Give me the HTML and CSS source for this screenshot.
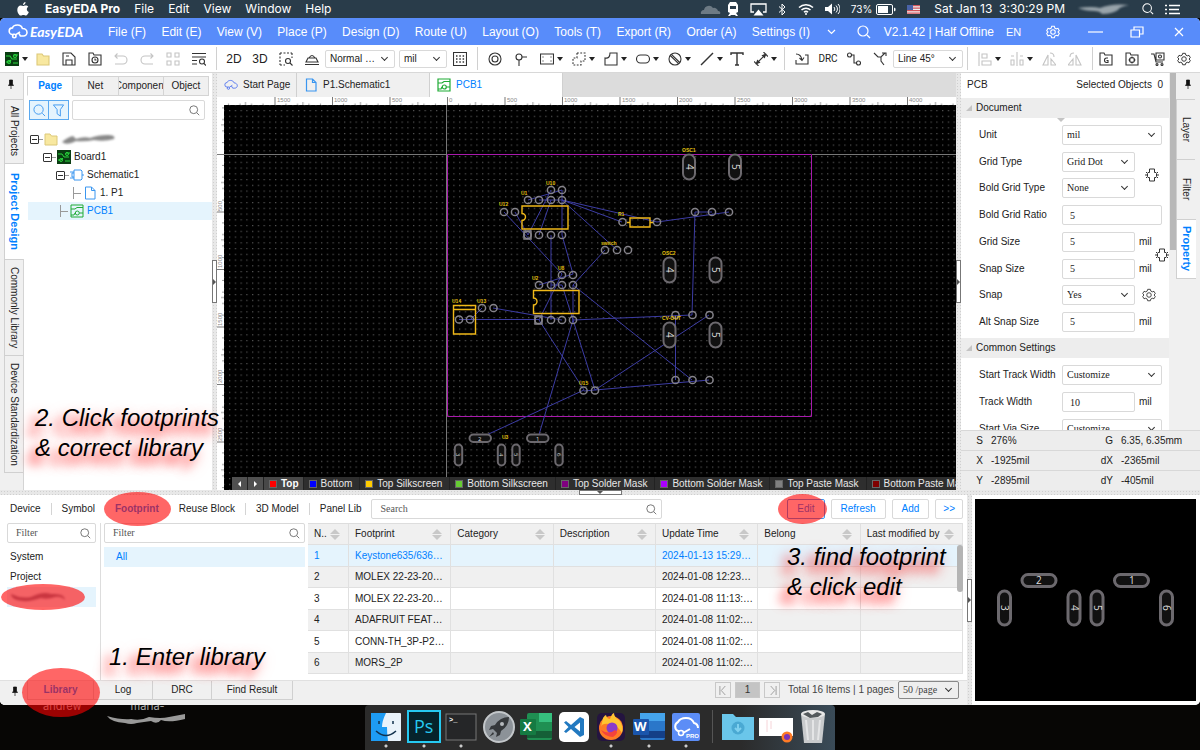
FILE: index.html
```html
<!DOCTYPE html>
<html lang="en">
<head>
    <meta charset="UTF-8">
    <meta name="viewport" content="width=device-width, initial-scale=1.0">
    <title>EasyEDA Pro</title>
    <link rel="stylesheet" href="styles.css">
</head>
<body>
    <!-- shared icons -->
    <svg class="defs" aria-hidden="true">
        <symbol id="search" viewBox="0 0 14 14"><circle cx="6" cy="6" r="5"/><path d="M10 10l3 3"/></symbol>
        <symbol id="gear" viewBox="0 0 16 16"><path d="M6.500 1.500h3l.6 2 1.600.9 2-.6 1.500 2.700-1.500 1.500 1.500 1.600-1.500 2.700-2-.6-1.600.9-.6 2h-3l-.6-2-1.600-.9-2 .6L.8 9.600l1.500-1.600L.8 6.500l1.500-2.700 2 .6 1.600-.9z"/><circle cx="8" cy="8" r="2.600"/></symbol>
        <symbol id="cloud" viewBox="0 0 20 15"><path d="M6 10.500H4.500a3.300 3.300 0 0 1 0-6.600C5 1.800 7.200 1 9.500 1c2.400 0 4.300 1.400 4.900 3.500 2.600 0 4.600 1.700 4.600 4.100 0 1.800-1.500 3.400-3.600 3.400h-3l-1.800-3.200M7.500 10.800l4.500-3"/><circle cx="6.300" cy="12" r="1.700"/></symbol>
        <symbol id="file" viewBox="0 0 14 14"><path d="M2.500 1h6l3.500 3.500V13h-9.500zM8.500 1v3.500H12"/></symbol>
        <symbol id="folder" viewBox="0 0 14 14"><path d="M1 2h5l1.500 2H13v9H1z" fill="#f8e8a0" stroke="#dcc878"/></symbol>
        <symbol id="board" viewBox="0 0 14 14"><path d="M0 0h14v14H0z" fill="#0a3d12" stroke="none"/><path d="M1 4h4l2 3h5M1 10h3l2-2M8 11h5M9 3h4" stroke="#28d83c"/><circle cx="4" cy="10" r="1.500" stroke="#28d83c"/><circle cx="10" cy="4" r="1.500" stroke="#28d83c"/></symbol>
        <symbol id="pcb" viewBox="0 0 14 14"><path d="M1 1h12v12H1zM1 5h4l2-1.500h6M1 11h3l1-2M9.500 9H13"/><circle cx="7.300" cy="9" r="2"/></symbol>
        <symbol id="pin" viewBox="0 0 8 10"><path d="M2.500 1h3v4l1 1.500h-5l1-1.500zM4 6.500V10" fill="#111"/></symbol>
        <symbol id="chip" viewBox="0 0 14 14"><path d="M4.500 1h5v3.500H11l.500 1v3l-.500 1H9.500V13h-5V9.500H3l-.500-1v-3l.500-1h1.500zM0 7h2.500M11.500 7H14M1 4l1 1M13 4l-1 1M1 10l1-1M13 10l-1-1"/></symbol>
    </svg>

    <header class="macbar">
        <svg class="apple" viewBox="0 0 12 14"><path d="M8.500 0C8.600 1.600 7.500 3 6 3.100 5.900 1.600 7.200.2 8.500 0zM6.200 4c.7 0 1.400-.7 2.600-.6 1 0 1.900.5 2.500 1.300-2.200 1.400-1.800 4.400.5 5.300-.5 1.400-1.700 3.500-2.900 3.600-1 0-1.300-.6-2.500-.6s-1.600.6-2.500.6C2.300 13.600.3 10.600.3 7.900c0-2.700 1.600-4.400 3.400-4.400 1.100 0 1.900.6 2.500.5z"/></svg>
        <b>EasyEDA Pro</b><span>File</span><span>Edit</span><span>View</span><span>Window</span><span>Help</span>
        <div class="tray">
            <svg class="haze" width="22" height="12" viewBox="0 0 22 12"><path d="M1 11a3 3 0 0 1 3-4 5 5 0 0 1 9-2 4 4 0 0 1 5 3 2 2 0 0 1 2 3z" fill="#6d7a84"/></svg>
            <svg width="12" height="15" viewBox="0 0 12 15"><path d="M3 0h6l2 3v7l-2 1 2 3H9l-1-1H4l-1 1H1l2-3-2-1V3z" fill="#fff"/><path d="M3 4h6v3H3z" fill="#2b3d4b"/></svg>
            <svg width="17" height="13" viewBox="0 0 17 13"><path d="M4 9H1V1h15v8h-3" fill="none" stroke="#fff" stroke-width="1.300"/><path d="M8.500 6.500l5 6h-10z" fill="#fff"/></svg>
            <svg width="9" height="13" viewBox="0 0 9 13"><path d="M1 3.500l6 5.500-3 3V1l3 3-6 5.500" fill="none" stroke="#fff"/></svg>
            <svg width="16" height="12" viewBox="0 0 16 12"><path d="M1 4.500a10 10 0 0 1 14 0M3.500 7a6.500 6.500 0 0 1 9 0M6 9.300a3 3 0 0 1 4 0" fill="none" stroke="#fff" stroke-width="1.500"/><circle cx="8" cy="11" r="1" fill="#fff"/></svg>
            <svg width="15" height="12" viewBox="0 0 15 12"><path d="M0 4h3l4-3.500v11L3 8H0z" fill="#fff"/><path d="M9 4a3 3 0 0 1 0 4M11 2.500a5 5 0 0 1 0 7M13 1a7 7 0 0 1 0 10" fill="none" stroke="#fff"/></svg>
            <small>73%</small>
            <svg width="20" height="11" viewBox="0 0 20 11"><rect x=".5" y=".5" width="16" height="10" rx="1.500" fill="none" stroke="#fff"/><path d="M2 2h10v7H2zM18 3.500l1.500 1v2l-1.500 1z" fill="#fff"/></svg>
            <svg width="13" height="9" viewBox="0 0 13 9"><path d="M0 0h13v9H0z" fill="#eee"/><path d="M0 .7h13M0 3.200h13M0 5.700h13M0 8.200h13" stroke="#d2545c" stroke-width="1.300"/><path d="M0 0h6v5H0z" fill="#4a63a8"/></svg>
            <span class="clock">Sat Jan 13&nbsp; 3:30:29 PM</span>
            <svg class="smear" width="54" height="14" viewBox="0 0 54 14"><path d="M1 6q14-2 22 0q12-5 29-3q-10 2-11 5q-6 4-16 4q-2-3-8-3q-9 0-16-3" fill="#98a3aa"/></svg>
            <svg class="line-icon" width="12" height="12"><use href="#search"/></svg>
            <svg width="16" height="11" viewBox="0 0 16 11"><path d="M4 1.500h11M4 5.500h10M4 9.500h11M0 1.500h2M0 5.500h2M0 9.500h2" stroke="#fff" stroke-width="1.500"/></svg>
        </div>
    </header>

    <main class="app">
        <nav class="menubar">
            <div class="logo"><svg class="line-icon"><use href="#cloud"/></svg><span>EasyEDA</span></div>
            <div class="menus">
                <button>File (F)</button><button>Edit (E)</button><button>View (V)</button><button>Place (P)</button><button>Design (D)</button><button>Route (U)</button><button>Layout (O)</button><button>Tools (T)</button><button>Export (R)</button><button>Order (A)</button><button>Settings (I)</button>
            </div>
            <div class="winbar">
                <button aria-label="More"><svg class="line-icon" width="9" height="6" viewBox="0 0 9 6"><path d="M1 1l3.500 3.500L8 1"/></svg></button>
                <button aria-label="Search"><svg class="line-icon" width="14" height="14"><use href="#search"/></svg></button>
                <span class="version">V2.1.42 | Half Offline</span>
                <button class="lang">EN</button>
                <button class="cell" aria-label="Settings"><svg class="line-icon" width="14" height="14"><use href="#gear"/></svg></button>
                <button class="cell" aria-label="Minimize"><svg class="line-icon" width="15" height="14" viewBox="0 0 15 14"><path d="M0 7h15"/></svg></button>
                <button class="cell" aria-label="Restore"><svg class="line-icon" width="14" height="12" viewBox="0 0 14 12"><path d="M1 4h8.500v7H1zM4 4V1h9v7H9.500"/></svg></button>
                <button class="cell" aria-label="Close"><svg class="line-icon" width="10" height="10" viewBox="0 0 10 10"><path d="M1 1l8 8M9 1L1 9"/></svg></button>
            </div>
        </nav>

        <div class="toolbar">
            <button class="drop first" aria-label="New"><svg><use href="#board"/></svg></button>
            <button aria-label="Open"><svg><use href="#folder"/></svg></button>
            <button aria-label="Save"><svg viewBox="0 0 14 14"><path d="M1 1h8l4 4v8H1zM4 13V8h6v5M4 4h3"/></svg></button>
            <button aria-label="History"><svg viewBox="0 0 14 14"><path d="M1 13V1h4l1 2h7v10z"/><circle cx="7" cy="8" r="3"/><path d="M7 6.500V8h1.500"/></svg></button>
            <button class="off" aria-label="Undo"><svg viewBox="0 0 14 14"><path d="M3.500 1.500L1 4l2.500 2.500M1 4h8a4 4 0 0 1 0 8H1"/></svg></button>
            <button class="off" aria-label="Redo"><svg viewBox="0 0 14 14"><path d="M10.500 1.500L13 4l-2.500 2.500M13 4H5a4 4 0 0 0 0 8h8"/></svg></button>
            <button class="off" aria-label="Panels"><svg viewBox="0 0 14 14"><path d="M1 1h4v4H1zM9 1h4v4H9zM1 9h4v4H1zM9 9h4v4H9z"/></svg></button>
            <button aria-label="Find"><svg viewBox="0 0 14 14"><path d="M0 1.500h14M0 5h14M0 8.500h5M0 12h5M12 11.500l2 2"/><circle cx="10" cy="9.500" r="2.500"/></svg></button>
            <i class="sep"></i>
            <button class="word">2D</button>
            <button class="word">3D</button>
            <button aria-label="Select"><svg viewBox="0 0 14 14"><path d="M1 1h12M1 1v12M13 1v5M1 13h5" stroke-dasharray="2 1.500"/><circle cx="9" cy="9" r="2.500"/><path d="M11 11l2.500 2.500"/></svg></button>
            <button aria-label="Brush"><svg viewBox="0 0 14 14"><path d="M1 10h12l-2-4H3zM4 6q3-5 6 0M0 12.500h14"/></svg></button>
            <span class="select w70"><select aria-label="View mode"><option>Normal …</option></select></span>
            <span class="select w48"><select aria-label="Unit"><option>mil</option></select></span>
            <button aria-label="Grid"><svg viewBox="0 0 14 14"><path d="M.5.500h13v13H.5z"/><path d="M3 4h9M3 7h9M3 10h9" stroke-dasharray="1.500 1.800" stroke-width="1.500"/></svg></button>
            <i class="sep"></i>
            <button aria-label="Pad"><svg viewBox="0 0 14 14"><circle cx="7" cy="7" r="6"/><circle cx="7" cy="7" r="3"/></svg></button>
            <button aria-label="Via"><svg viewBox="0 0 14 14"><circle cx="5" cy="5" r="3"/><path d="M8 5h5M5 8v6"/></svg></button>
            <button class="drop" aria-label="Board outline"><svg viewBox="0 0 14 14"><path d="M.500 2h13v10H.500z"/><path d="M3 4.500v1M11 4.500v1M3 8.500v1M11 8.500v1"/></svg></button>
            <button class="drop" aria-label="Region"><svg viewBox="0 0 14 14"><path d="M5 1h8v8h-4v4H1V6h4z" stroke-dasharray="1.800 1.500"/></svg></button>
            <button class="drop" aria-label="Polygon"><svg viewBox="0 0 14 14"><path d="M6 1h7v12H1V6q5 1 5-5z"/></svg></button>
            <button class="drop" aria-label="Shape"><svg viewBox="0 0 14 14"><rect x=".5" y="3" width="13" height="8" rx="4"/></svg></button>
            <button class="drop" aria-label="Keepout"><svg viewBox="0 0 14 14"><circle cx="7" cy="7" r="6"/><path d="M2.300 3.500l8.200 8.200M3.500 2.300l8.200 8.200"/></svg></button>
            <button class="drop" aria-label="Line"><svg viewBox="0 0 14 14"><path d="M1 13L13 1" stroke-width="1.500"/></svg></button>
            <button class="text" aria-label="Text"><svg viewBox="0 0 14 14"><path d="M1 3V1h12v2M7 1v12M5 13h4" stroke-width="1.400"/></svg></button>
            <button class="drop" aria-label="Dimension"><svg viewBox="0 0 14 14"><path d="M2 12L12 2M9.500 0L14 4.500M0 9.500L4.500 14"/><path d="M11.500 2.500l-3 1 2 2zM2.500 11.500l3-1-2-2z" fill="#333"/></svg></button>
            <i class="sep"></i>
            <button aria-label="Import"><svg viewBox="0 0 14 14"><path d="M1 2q5 0 6 6M4.500 6L7 8.500 9 5.500M1 8v4h12V3h-3"/></svg></button>
            <button class="drc">DRC</button>
            <button aria-label="Track"><svg viewBox="0 0 14 14"><circle cx="2.500" cy="3" r="2"/><circle cx="11.500" cy="11" r="2"/><path d="M4.500 3H7v8h2.500"/></svg></button>
            <button aria-label="Route"><svg viewBox="0 0 14 14"><path d="M1 1l4 4h3l4-4M9 1h4v3M8 5v4l3 4"/></svg></button>
            <span class="select w70"><select aria-label="Line mode"><option>Line 45°</option></select></span>
            <i class="sep"></i>
            <button class="drop off" aria-label="Align"><svg viewBox="0 0 14 14"><path d="M1 0v14M4 2h5v4H4zM4 9h9v4H4z"/></svg></button>
            <button class="drop off" aria-label="Distribute"><svg viewBox="0 0 14 14"><path d="M7 0v14M1 8h3v5H1zM10 8h3v5h-3zM1 4h3M10 4h3"/></svg></button>
            <button class="off" aria-label="Rotate left"><svg viewBox="0 0 14 14"><path d="M6 13H1L6 3zM9 13V7l5 6zM8 1q4 0 4 4"/></svg></button>
            <button class="off" aria-label="Rotate right"><svg viewBox="0 0 14 14"><path d="M8 13h5L8 3zM5 13V7l-5 6zM6 1Q2 1 2 5"/></svg></button>
            <i class="sep tight"></i>
            <button aria-label="Gerber"><svg viewBox="0 0 14 14"><path d="M1 13V1h4l1 2h7v10z"/><path d="M9 6H7.500Q5.500 6 5.500 8.200T7.500 10.500H9V8.500H7.500"/></svg></button>
            <button aria-label="Pick and place"><svg viewBox="0 0 14 14"><path d="M1 13V1h4l1 2h7v10z"/><circle cx="7" cy="8" r="2.500"/><path d="M7 4.500v2M7 9.500v2M3.500 8h2M8.500 8h2"/></svg></button>
            <button aria-label="Order"><svg viewBox="0 0 14 14"><path d="M0 2h3l2 8h7M5 1h8v7H5z"/><circle cx="9" cy="4.500" r="1.500"/><circle cx="6" cy="12.500" r="1"/><circle cx="11" cy="12.500" r="1"/></svg></button>
            <button aria-label="Preferences"><svg><use href="#gear"/></svg></button>
        </div>

        <div class="workspace">
            <aside class="side left">
                <svg class="pin"><use href="#pin"/></svg>
                <button class="t64">All Projects</button>
                <button class="t96 on">Project Design</button>
                <button class="t96">Commonly Library</button>
                <button class="t117">Device Standardization</button>
            </aside>

            <section class="project">
                <div class="ptabs">
                    <button class="on">Page</button><button>Net</button><button><span>Component</span></button><button>Object</button>
                </div>
                <div class="pfind">
                    <button aria-label="Find"><svg><use href="#search"/></svg></button><button aria-label="Filter"><svg viewBox="0 0 14 14"><path d="M1.500 1h11L9 6v7L5.500 10.500V6z"/></svg></button>
                    <label class="field"><input type="text" aria-label="Find in project"><svg><use href="#search"/></svg></label>
                </div>
                <ul class="tree">
                    <li><i class="box"></i><svg><use href="#folder"/></svg>
                        <svg class="scrawl" viewBox="0 0 54 12"><path d="M1 9q6-5 11-6l3 3q8-3 14-1q8-3 18-3q8 0 6 4q-10 3-20 1q-10 2-18 1Q6 13 1 9" fill="#888"/></svg></li>
                    <li class="l1"><i class="box"></i><svg><use href="#board"/></svg>Board1</li>
                    <li class="l2"><i class="box"></i><svg viewBox="0 0 14 14" class="blue"><path d="M4 2h7l1 1v8l-1 1H4zM0 4h4M0 10h4M12 7h2M4 5H2v4h2"/></svg>Schematic1</li>
                    <li class="l3"><i class="leaf"></i><svg class="blue"><use href="#file"/></svg>1. P1</li>
                    <li class="l2 on"><i class="leaf"></i><svg class="green"><use href="#pcb"/></svg>PCB1</li>
                </ul>
                <p class="note note2">2. Click footprints<br>&amp; correct library</p>
            </section>

            <div class="split"><i></i></div>

            <section class="editor">
                <div class="docs">
                    <button><svg class="indigo"><use href="#cloud"/></svg>Start Page</button>
                    <button class="wide"><svg class="blue"><use href="#file"/></svg>P1.Schematic1</button>
                    <button class="wide on"><svg class="green"><use href="#pcb"/></svg>PCB1</button>
                </div>
                <svg class="hruler">
                    <defs>
                        <pattern id="ht" patternUnits="userSpaceOnUse" x="230" width="57.500" height="8"><path d="M.5 0v8" stroke="#777"/><path d="M28.500 5v3M11.500 6.500V8M23 6.500V8M34.500 6.500V8M46 6.500V8" stroke="#999"/></pattern>
                    </defs>
                    <rect x="7" width="100%" height="8" fill="url(#ht)"/>
                    <text x="60" y="5">1500</text><text x="117" y="5">1000</text><text x="175" y="5">500</text><text x="232" y="5">0</text><text x="290" y="5">500</text><text x="347" y="5">1000</text><text x="405" y="5">1500</text><text x="462" y="5">2000</text><text x="520" y="5">2500</text><text x="577" y="5">3000</text><text x="635" y="5">3500</text><text x="692" y="5">4000</text>
                </svg>
                <div class="stage">
                    <svg class="vruler">
                        <defs>
                            <pattern id="vt" patternUnits="userSpaceOnUse" y="49" width="7" height="57.500"><path d="M0 .5h7" stroke="#777"/><path d="M4 28.500h3M5 11.500h2M5 23h2M5 34.500h2M5 46h2" stroke="#999"/></pattern>
                        </defs>
                        <rect width="7" height="100%" fill="url(#vt)"/>
                        <g><text transform="translate(5 106)rotate(-90)">500</text><text transform="translate(5 163)rotate(-90)">1000</text><text transform="translate(5 221)rotate(-90)">1500</text><text transform="translate(5 278)rotate(-90)">2000</text><text transform="translate(5 336)rotate(-90)">2500</text></g>
                    </svg>
                    <div class="board">
                        <svg class="pcb">
                            <defs>
                                <pattern id="dots" patternUnits="userSpaceOnUse" x="-.75" y="-.75" width="5.750" height="5.750"><path d="M0 0h1.300v1.300H0z" fill="#505050"/></pattern>
                                <circle id="p" r="3.600"/>
                                <rect id="v" x="-6" y="-12.500" width="12" height="25" rx="6"/>
                                <rect id="s" x="-3.700" y="-10.500" width="7.400" height="21" rx="3.700"/>
                            </defs>
                            <rect width="100%" height="100%" fill="url(#dots)"/>
                            <!-- origin of the board is at 223,49 of the canvas -->
                            <path d="M222.500 0v372M0 49.500h223M588 49.500h900" stroke="#777" fill="none"/>
                            <g transform="translate(-224 -105)">
                                <path d="M447.500 154.500h364v262h-364z" class="outline"/>
                                <path class="rats" d="M528 200L562 190M539 200H562M551 190L528 235M551 200L539 235M562 190V235M562 200L622 222M562 200L657 222M562 200L617 250M504 212L562 274M515 212L528 235M657 222L729 212M695 212H712M695 212L692 315M551 235V285M562 235L573 274M605 250L573 285M539 285L573 274M562 274L539 320M551 285V320M562 285L573 320M573 285V320M551 285H562M573 285L692 380M482 308L470 320M493 308L562 320M459 319.500H539M573 320L692 315M539 320L584 390M573 320L595 390M573 320L538 438M584 391L595 390L709 380M595 390L709 315M584 390L480 438M675.500 315V380"/>
                                <g class="pads">
                                    <use href="#p" x="551" y="190"/><use href="#p" x="562" y="190"/>
                                    <use href="#p" x="528" y="200"/><use href="#p" x="539" y="200"/><use href="#p" x="551" y="200"/><use href="#p" x="562" y="200"/>
                                    <use href="#p" x="504" y="212"/><use href="#p" x="515" y="212"/>
                                    <rect x="524" y="231" width="7" height="8"/><use href="#p" x="527.500" y="235"/><use href="#p" x="539" y="235"/><use href="#p" x="551" y="235"/><use href="#p" x="562" y="235"/>
                                    <use href="#p" x="622.500" y="222"/><use href="#p" x="657" y="222"/>
                                    <use href="#p" x="695" y="212"/><use href="#p" x="712" y="212"/><use href="#p" x="729" y="212"/>
                                    <use href="#p" x="605" y="250"/><use href="#p" x="617" y="250"/><use href="#p" x="628" y="250"/>
                                    <use href="#p" x="562" y="275"/><use href="#p" x="573" y="275"/>
                                    <use href="#p" x="539" y="285"/><use href="#p" x="551" y="285"/><use href="#p" x="562" y="285"/><use href="#p" x="573" y="285"/>
                                    <rect x="535" y="316" width="7" height="8"/><use href="#p" x="538.500" y="320"/><use href="#p" x="551" y="320"/><use href="#p" x="562" y="320"/><use href="#p" x="573" y="320"/>
                                    <use href="#p" x="482" y="308"/><use href="#p" x="493.500" y="308"/><use href="#p" x="459" y="319.500"/><use href="#p" x="470" y="319.500"/>
                                    <use href="#p" x="675.500" y="315"/><use href="#p" x="692.500" y="315"/><use href="#p" x="709.500" y="315"/>
                                    <use href="#p" x="675.500" y="380"/><use href="#p" x="692.500" y="380"/><use href="#p" x="709.500" y="380"/>
                                    <use href="#p" x="583.500" y="390.500"/><use href="#p" x="595" y="390.500"/>
                                </g>
                                <g class="slots">
                                    <use href="#v" x="689" y="167"/><use href="#v" x="735" y="167"/><use href="#v" x="669.500" y="270"/><use href="#v" x="715.500" y="270"/><use href="#v" x="669.500" y="335"/><use href="#v" x="715.500" y="335"/>
                                    <use href="#s" x="458.500" y="455"/><use href="#s" x="501.500" y="455"/><use href="#s" x="516" y="455"/><use href="#s" x="559" y="455"/>
                                    <rect x="469.500" y="434.500" width="21.500" height="7.500" rx="3.700"/><rect x="527" y="434.500" width="21.500" height="7.500" rx="3.700"/>
                                </g>
                                <g class="silk">
                                    <path d="M522 206h46v23h-46v-8.500a3.500 3.500 0 0 0 0-7zM533.500 290.500h45.500v23h-45.500v-8.500a3.500 3.500 0 0 0 0-7zM630 218h20v9h-20zM627 222.500h3M650 222.500h3M453.500 305.500h22v28.500h-22zM453.500 309.500h22"/>
                                </g>
                                <g class="names">
                                    <text x="546" y="185">U10</text><text x="521" y="195">U1</text><text x="499" y="206">U12</text><text x="618" y="216">R1</text><text x="601" y="245">switch</text><text x="682" y="152">OSC1</text><text x="662" y="255">OSC2</text><text x="558" y="270">U8</text><text x="532" y="280">U2</text><text x="452" y="303">U14</text><text x="477" y="303">U13</text><text x="662" y="320">CV-OUT</text><text x="579" y="385">U15</text><text x="502" y="439">U3</text>
                                </g>
                                <g class="nums">
                                    <text transform="translate(686 164)rotate(90)">4</text><text transform="translate(732 164)rotate(90)">5</text><text transform="translate(666 267)rotate(90)">4</text><text transform="translate(712 267)rotate(90)">5</text><text transform="translate(666 332)rotate(90)">4</text><text transform="translate(712 332)rotate(90)">5</text>
                                </g>
                                <g class="nums small">
                                    <text transform="translate(456 453)rotate(90)">3</text><text transform="translate(499 453)rotate(90)">4</text><text transform="translate(514 453)rotate(90)">5</text><text transform="translate(557 453)rotate(90)">6</text><text x="478" y="441">2</text><text x="536" y="441">1</text>
                                </g>
                            </g>
                        </svg>
                        <div class="layers">
                            <button class="nav" aria-label="Previous"><i class="prev"></i></button><button class="nav" aria-label="Next"><i class="next"></i></button>
                            <button class="on"><i class="c1"></i>Top</button>
                            <button><i class="c2"></i>Bottom</button>
                            <button><i class="c3"></i>Top Silkscreen</button>
                            <button><i class="c4"></i>Bottom Silkscreen</button>
                            <button><i class="c5"></i>Top Solder Mask</button>
                            <button><i class="c6"></i>Bottom Solder Mask</button>
                            <button><i class="c7"></i>Top Paste Mask</button>
                            <button><i class="c8"></i>Bottom Paste Mask</button>
                        </div>
                    </div>
                </div>
            </section>

            <div class="split"><i></i></div>

            <div class="right">
                <div class="rtop">
                    <section class="props">
                        <header><span>PCB</span><span>Selected Objects&nbsp; 0</span></header>
                        <h3>Document</h3>
                        <form class="form doc">
                            <div><label for="unit">Unit</label><span class="select w100"><select id="unit"><option>mil</option></select></span></div>
                            <div><label for="gt">Grid Type</label><span class="select w73"><select id="gt"><option>Grid Dot</option></select></span></div>
                            <div><label for="bgt">Bold Grid Type</label><span class="select w73"><select id="bgt"><option>None</option></select></span></div>
                            <div><label for="bgr">Bold Grid Ratio</label><input class="w100" id="bgr" value="5"></div>
                            <div><label for="gs">Grid Size</label><input class="w73" id="gs" value="5"><em>mil</em></div>
                            <div><label for="ss">Snap Size</label><input class="w73" id="ss" value="5"><em>mil</em></div>
                            <div><label for="snap">Snap</label><span class="select w73"><select id="snap"><option>Yes</option></select></span><svg class="cog"><use href="#gear"/></svg></div>
                            <div><label for="as">Alt Snap Size</label><input class="w73" id="as" value="5"><em>mil</em></div>
                            <svg class="chip a"><use href="#chip"/></svg>
                            <svg class="chip b"><use href="#chip"/></svg>
                        </form>
                        <h3>Common Settings</h3>
                        <form class="form common">
                            <div><label for="stw">Start Track Width</label><span class="select w100"><select id="stw"><option>Customize</option></select></span></div>
                            <div><label for="tw">Track Width</label><input class="w73" id="tw" value="10"><em>mil</em></div>
                            <div><label for="svs">Start Via Size</label><span class="select w100"><select id="svs"><option>Customize</option></select></span></div>
                        </form>
                    </section>
                    <aside class="side rside">
                        <svg class="pin"><use href="#pin"/></svg>
                        <button class="t60">Layer</button>
                        <button class="t60">Filter</button>
                        <button class="t60 on">Property</button>
                    </aside>
                </div>
                <dl class="status">
                    <dt>S</dt><dd>276%</dd><dt>G</dt><dd>6.35, 6.35mm</dd>
                    <dt>X</dt><dd>-1925mil</dd><dt>dX</dt><dd>-2365mil</dd>
                    <dt>Y</dt><dd>-2895mil</dd><dt>dY</dt><dd>-405mil</dd>
                </dl>
            </div>
        </div>

        <div class="split flat"><i></i></div>

        <div class="bottom">
            <section class="library">
                <div class="lbar">
                    <button class="ltab">Device</button><button class="ltab bare">Symbol</button><button class="ltab bare on mark">Footprint</button><button class="ltab">Reuse Block</button><button class="ltab">3D Model</button><button class="ltab bare">Panel Lib</button>
                    <label class="field find"><input type="text" placeholder="Search" aria-label="Search"><svg><use href="#search"/></svg></label>
                    <div class="acts"><button class="edit mark">Edit</button><button>Refresh</button><button>Add</button><button>&gt;&gt;</button></div>
                </div>
                <div class="lbody">
                    <div class="owners">
                        <label class="field"><input type="text" placeholder="Filter" aria-label="Filter owners"><svg><use href="#search"/></svg></label>
                        <button>System</button>
                        <button>Project</button>
                        <button class="on mark" aria-label="Personal"><svg viewBox="0 0 56 12"><path d="M1 3q10 5 20 3q12-6 20-3q14-1 14 6q-4-4-10-3q-8 3-14 1q-14 5-24 2q-6-2-6-6" fill="#7a86a0"/></svg></button>
                    </div>
                    <div class="cats">
                        <label class="field"><input type="text" placeholder="Filter" aria-label="Filter classes"><svg><use href="#search"/></svg></label>
                        <button class="on">All</button>
                        <p class="note note1">1. Enter library</p>
                    </div>
                    <div class="results">
                        <table>
                            <colgroup><col class="cno"><col span="6"></colgroup>
                            <thead><tr><th>N..<i></i></th><th>Footprint<i></i></th><th>Category<i></i></th><th>Description<i></i></th><th>Update Time<i></i></th><th>Belong<i></i></th><th>Last modified by<i></i></th></tr></thead>
                            <tbody>
                                <tr class="on"><td>1</td><td>Keystone635/636…</td><td></td><td></td><td>2024-01-13 15:29…</td><td></td><td></td></tr>
                                <tr><td>2</td><td>MOLEX 22-23-20…</td><td></td><td></td><td>2024-01-08 12:23…</td><td></td><td></td></tr>
                                <tr><td>3</td><td>MOLEX 22-23-20…</td><td></td><td></td><td>2024-01-08 11:13:…</td><td></td><td></td></tr>
                                <tr><td>4</td><td>ADAFRUIT FEAT…</td><td></td><td></td><td>2024-01-08 11:02:…</td><td></td><td></td></tr>
                                <tr><td>5</td><td>CONN-TH_3P-P2…</td><td></td><td></td><td>2024-01-08 11:02:…</td><td></td><td></td></tr>
                                <tr><td>6</td><td>MORS_2P</td><td></td><td></td><td>2024-01-08 11:02:…</td><td></td><td></td></tr>
                            </tbody>
                        </table>
                        <div class="thumb"></div>
                        <p class="note note3">3. find footprint<br>&amp; click edit</p>
                    </div>
                </div>
                <div class="lfoot">
                    <svg class="pin"><use href="#pin"/></svg>
                    <button class="on mark">Library</button><button>Log</button><button>DRC</button><button class="last">Find Result</button>
                    <div class="pager">
                        <button aria-label="First page"><svg viewBox="0 0 10 10"><path d="M1 0v10M7 0L2.500 5 7 10"/></svg></button>
                        <button class="cur">1</button>
                        <button aria-label="Last page"><svg viewBox="0 0 10 10"><path d="M9 0v10M3 0l4.500 5L3 10"/></svg></button>
                        <span>Total 16 Items | 1 pages</span>
                        <span class="select w61"><select aria-label="Page size"><option>50 /page</option></select></span>
                    </div>
                </div>
            </section>
            <div class="split"><i></i></div>
            <section class="preview">
                <svg viewBox="975 499 221 202">
                    <g class="slots big">
                        <rect x="1022" y="574.500" width="34" height="12" rx="6"/><rect x="1114.500" y="574.500" width="34" height="12" rx="6"/>
                        <rect x="998.500" y="591" width="12" height="34" rx="6"/><rect x="1068" y="591" width="12" height="34" rx="6"/><rect x="1091" y="591" width="12" height="34" rx="6"/><rect x="1160.500" y="591" width="12" height="34" rx="6"/>
                    </g>
                    <g class="nums">
                        <text x="1036" y="584">2</text><text x="1129" y="584">1</text>
                        <text transform="translate(1001 605)rotate(90)">3</text><text transform="translate(1071 605)rotate(90)">4</text><text transform="translate(1094 605)rotate(90)">5</text><text transform="translate(1163 605)rotate(90)">6</text>
                    </g>
                </svg>
            </section>
        </div>
    </main>

    <footer class="desktop">
        <div class="names-row"><span>andrew</span><span>maria-<svg viewBox="0 0 80 12"><path d="M1 3q14 4 24 3q10 2 18-2q12 2 20 0l16-3v5q-16 4-24 1q-4 5-10 1l-14 2q-6 2-12 0Q5 9 1 3" fill="#999"/></svg></span></div>
        <div class="dock">
            <svg class="run" viewBox="0 0 34 34"><rect x="2" y="3" width="30" height="28" rx="1" fill="#eaf3fb"/><path d="M2 3h15q-4 8-4 14h5q0 7 1 14H2z" fill="#1e9cf4"/><path d="M10 11v3M24 11v3M7 21q10 9 20 0" fill="none" stroke="#12324e" stroke-width="1.500"/></svg>
            <svg class="run" viewBox="0 0 34 34"><rect x="1" y="1" width="32" height="31" fill="#06232b" stroke="#26c9f1" stroke-width="2"/><text x="7" y="23" class="ps">Ps</text></svg>
            <svg class="run" viewBox="0 0 34 34"><rect x="2" y="4" width="30" height="26" fill="#252628" stroke="#777"/><text x="5" y="12" class="term">&gt;_</text></svg>
            <svg viewBox="0 0 34 34"><circle cx="17" cy="17" r="15" fill="#8c9298" stroke="#c3c7ca" stroke-width="2"/><path d="M27 7q-9 0-14 8l-4 1-2 4 4-1 4 4-1 4 4-2 1-4q8-5 8-14zM11 22l-4 5 5-3z" fill="#35383b"/><circle cx="20" cy="14" r="2" fill="#b6babd"/></svg>
            <svg viewBox="0 0 34 34"><rect x="8" y="3" width="25" height="27" rx="2" fill="#1f8f52"/><path d="M20 3h13v9H20z" fill="#36c07e"/><path d="M8 21h25v7H8z" fill="#155f37"/><rect x="1" y="9" width="16" height="16" rx="1" fill="#157a42"/><text x="4" y="21" class="ltr">X</text></svg>
            <svg viewBox="0 0 34 34"><rect x="2" y="2" width="30" height="30" rx="5" fill="#fff"/><path d="M23 7l4 2v16l-4 2-9-8-5 4-2-1.500 4.500-4.500L7 12.500 9 11l5 4zM23 12.500v9L17.500 17z" fill="#2279c0" fill-rule="evenodd"/></svg>
            <svg class="run" viewBox="0 0 34 34"><rect x="3" y="3" width="28" height="28" rx="5" fill="#241440"/><circle cx="17" cy="18" r="12" fill="#ff7b26"/><path d="M9 8q2-3 3-3 1 4 4 4 2-6 4-6 0 4 5 7 5 6 3 13-6-10-13-9-7-1-8 3z" fill="#ffc531"/><circle cx="18" cy="18" r="5.500" fill="#8a3cc8"/><path d="M7 20q8 5 14 0 5 2-2 7-8 0-12-7" fill="#f4433c"/></svg>
            <svg class="run" viewBox="0 0 34 34"><rect x="8" y="3" width="25" height="27" rx="2" fill="#2a77c9"/><path d="M8 3h25v8H8z" fill="#45a4ec"/><path d="M8 21h25v7H8z" fill="#143f87"/><rect x="1" y="9" width="16" height="16" rx="1" fill="#1a55ac"/><text x="2" y="21" class="ltr">W</text></svg>
            <svg class="run" viewBox="0 0 34 34"><rect x="3" y="3" width="28" height="28" rx="2" fill="#5c8df6"/><path d="M10 21H9a5 5 0 0 1 0-9q2-4 8-4 6 0 8 5 4 1 4 5M14 23l7-4" fill="none" stroke="#fff" stroke-width="2"/><circle cx="12" cy="23" r="2.500" fill="none" stroke="#fff" stroke-width="1.500"/><text x="17" y="28" class="pro">PRO</text></svg>
            <i class="bar"></i>
            <svg viewBox="0 0 34 34"><path d="M1 4h11l3 3h18v23H1z" fill="#6ac6ea"/><circle cx="17" cy="18" r="6.500" fill="#4aa9d3"/><path d="M17 14v7M14 18l3 3 3-3" fill="none" stroke="#7ed0ef" stroke-width="2"/></svg>
            <svg viewBox="0 0 34 34"><path d="M0 8h34v18H0z" fill="#fff"/><path d="M8 10v12M12 11v8" stroke="#f6d4d8"/><circle cx="28" cy="27" r="5.500" fill="#ff7b26"/><circle cx="28" cy="27" r="3" fill="#7b35b8"/></svg>
            <svg viewBox="0 0 34 34"><path d="M5 4h24l-3 29H8z" fill="#c9cbcd"/><ellipse cx="17" cy="4" rx="12" ry="4" fill="#e8e8e8"/><path d="M7 4l5-2 4 3 5-3 5 2-4 3-8 1z" fill="#54595c"/><path d="M10 10l2 20M17 10v20M24 10l-2 20" stroke="#e4e5e6" stroke-width="2"/></svg>
        </div>
    </footer>
</body>
</html>
```
FILE: styles.css
```css
*, *::before, *::after {
    box-sizing: border-box;
    margin: 0;
    padding: 0;
}
body {
    height: 100vh;
    min-height: 700px;
    display: flex;
    flex-direction: column;
    background: #070605;
    color: #222;
    font: 10px/14px "Liberation Sans", sans-serif;
    overflow: hidden;
}
button, input, select {
    font: inherit;
    color: inherit;
    border: 0;
    background: none;
    outline: 0;
}
button {
    white-space: nowrap;
}
ul {
    list-style: none;
}
svg {
    flex: none;
    display: block;
}
.defs {
    position: absolute;
    width: 0;
    height: 0;
}
.line-icon {
    fill: none;
    stroke: #fff;
    stroke-width: 1.2;
}

/* mac menu bar */
.macbar {
    flex: none;
    height: 18px;
    padding: 0 19px 0 17px;
    display: flex;
    align-items: center;
    gap: 14px;
    background: #293c4a;
    color: #fff;
    font: 12px/18px "Inter", sans-serif;
}
.apple {
    width: 12px;
    height: 14px;
    margin-right: 2px;
    fill: #fff;
}
.tray {
    margin-left: auto;
    display: flex;
    align-items: center;
    gap: 11px;
}
.tray small {
    font-size: 10px;
    margin-right: -7px;
}
.haze {
    margin-right: -6px;
}
.smear {
    filter: blur(1px);
}
.clock {
    margin: 0 1px 0 3px;
}

/* app window */
.app {
    flex: 1;
    min-height: 0;
    position: relative;
    z-index: 1;
    display: flex;
    flex-direction: column;
    background: #f0f0f0;
    border-radius: 5px;
}
.menubar {
    flex: none;
    height: 27px;
    display: flex;
    align-items: center;
    background: #588cfa;
    border-radius: 5px 5px 0 0;
    color: #fff;
    font-size: 12px;
}
.logo {
    flex: none;
    width: 108px;
    padding-left: 8px;
    display: flex;
    align-items: center;
    gap: 2px;
    font: italic bold 14px/20px "Lato", sans-serif;
}
.logo svg {
    width: 20px;
    height: 15px;
    stroke-width: 1.6;
}
.menus {
    flex: 0 1 702px;
    display: flex;
    justify-content: space-between;
}
.winbar {
    margin-left: auto;
    display: flex;
    align-items: center;
}
.winbar button {
    flex: none;
    width: 33px;
    display: flex;
    justify-content: center;
}
.version {
    margin: 0 12px 0 3px;
    white-space: nowrap;
}
.winbar .lang {
    width: 26px;
    justify-content: flex-start;
    font-size: 11px;
}
.winbar .cell {
    width: 42px;
}

.toolbar {
    flex: none;
    height: 28px;
    display: flex;
    align-items: center;
    background: #fff;
    border-bottom: 1px solid #d8d8d8;
}
.toolbar button {
    flex: none;
    width: 26px;
    height: 26px;
    display: flex;
    align-items: center;
    justify-content: center;
}
.toolbar svg {
    width: 14px;
    height: 14px;
    fill: none;
    stroke: #333;
    stroke-width: 1.1;
}
.toolbar .off svg {
    stroke: #c4c4c4;
}
.toolbar .drop {
    width: 32px;
    padding-left: 6px;
    justify-content: flex-start;
    gap: 3px;
}
.toolbar .first {
    width: 30px;
    padding-left: 5px;
}
.drop::after {
    content: "";
    border: 3px solid transparent;
    border-top: 4px solid #222;
    border-bottom: 0;
}
.toolbar .text {
    width: 22px;
}
.toolbar .word {
    font-size: 12px;
}
.toolbar .drc {
    font: 10px/14px "Roboto", sans-serif;
}
.sep {
    flex: none;
    width: 1px;
    height: 23px;
    margin: 0 4px;
    background: #d0d0d0;
}
.tight {
    margin-right: 0;
}

/* form controls */
.select {
    position: relative;
    display: block;
    flex: none;
}
.select select {
    width: 100%;
    height: 18px;
    padding-left: 4px;
    appearance: none;
    background: #fff;
    border: 1px solid #d9d9d9;
    border-radius: 2px;
}
.select::after {
    content: "";
    position: absolute;
    right: 8px;
    top: 50%;
    width: 5px;
    height: 5px;
    margin-top: -4px;
    border: solid #333;
    border-width: 0 1px 1px 0;
    transform: rotate(45deg);
    pointer-events: none;
}
.w48 { width: 48px; margin-left: 4px; }
.w61 { width: 61px; }
.w70 { width: 70px; }
.w73 { width: 73px; }
.w100 { width: 100px; }
.field {
    display: flex;
    align-items: center;
    min-width: 0;
    height: 20px;
    padding: 0 4px 0 8px;
    background: #fff;
    border: 1px solid #d9d9d9;
    border-radius: 2px;
    font-family: "Liberation Serif", serif;
}
.field input {
    flex: 1;
    min-width: 0;
}
.field input::placeholder {
    color: #555;
}
.field svg {
    width: 11px;
    height: 11px;
    fill: none;
    stroke: #555;
}

/* workspace */
.workspace {
    flex: 1;
    min-height: 0;
    display: flex;
}
.side {
    flex: none;
    width: 24px;
    padding-left: 4px;
    display: flex;
    flex-direction: column;
    background: #f0f0f0;
    border-right: 1px solid #d4d4d4;
}
.pin {
    width: 8px;
    height: 10px;
    flex: none;
    stroke: #111;
    stroke-width: .7;
}
.side .pin {
    margin: 6px 0 10px 3px;
}
.side button {
    flex: none;
    width: 19px;
    writing-mode: vertical-rl;
    border: 1px solid #d0d0d0;
    border-bottom: 0;
    border-right: 0;
    line-height: 17px;
    background: #f0f0f0;
}
.side .on {
    width: 20px;
    background: #fff;
    color: #0080ff;
    font-weight: bold;
    font-size: 11px;
}
.t64 { height: 64px; }
.t60 { height: 60px; }
.t96 { height: 96px; }
.side .t117 {
    height: 118px;
    border-bottom: 1px solid #d0d0d0;
}
.project {
    flex: none;
    width: 188px;
    position: relative;
    background: #fff;
}
.ptabs {
    display: flex;
    margin: 3px 3px 4px;
    height: 20px;
}
.ptabs button {
    flex: 1;
    min-width: 0;
    display: flex;
    justify-content: center;
    align-items: center;
    overflow: hidden;
    background: #f0f0f0;
    border: 1px solid #d4d4d4;
    border-right-width: 0;
}
.ptabs button:last-child {
    border-right-width: 1px;
}
.ptabs .on {
    background: #fff;
    border-bottom-color: #fff;
    color: #0080ff;
    font-weight: bold;
}
.pfind {
    display: flex;
    padding: 0 7px 0 5px;
}
.pfind button {
    flex: none;
    width: 20px;
    height: 20px;
    display: flex;
    align-items: center;
    justify-content: center;
    background: #e5f4fd;
    border: 1px solid #5aa9f0;
}
.pfind button + button {
    border-left: 0;
}
.pfind button svg {
    width: 13px;
    height: 13px;
    fill: none;
    stroke: #3a96f0;
}
.pfind .field {
    flex: 1;
    margin-left: 3px;
}
.tree {
    margin-top: 10px;
}
.tree li {
    height: 18px;
    margin-left: 4px;
    padding-left: 2px;
    display: flex;
    align-items: center;
    gap: 3px;
}
.tree svg {
    width: 14px;
    height: 14px;
    fill: none;
}
.tree .scrawl {
    width: 54px;
    height: 12px;
    filter: blur(1px);
}
.tree .l1 { padding-left: 15px; }
.tree .l2 { padding-left: 28px; }
.tree .l3 { padding-left: 41px; }
.tree .on {
    background: #e5f4fd;
    color: #0080ff;
}
.tree i {
    position: relative;
    width: 11px;
    height: 9px;
}
.tree .box::before {
    content: "";
    position: absolute;
    width: 9px;
    height: 9px;
    border: 1px solid #333;
    border-radius: 1px;
    background: linear-gradient(#333, #333) 50% 50% / 5px 1px no-repeat #fff;
}
.tree .box::after {
    content: "";
    position: absolute;
    left: 9px;
    top: 4px;
    width: 4px;
    border-top: 1px solid #999;
}
.tree .leaf::before {
    content: "";
    position: absolute;
    left: 4px;
    top: -2px;
    height: 12px;
    border-left: 1px solid #999;
}
.tree .leaf::after {
    content: "";
    position: absolute;
    left: 5px;
    top: 4px;
    width: 7px;
    border-top: 1px solid #999;
}
.blue { stroke: #3a96f0; }
.green { stroke: #1fab34; }
.indigo { stroke: #4a6ef0; }

/* splitters */
.split {
    flex: none;
    width: 5px;
    display: flex;
    align-items: center;
    background: #e8e8e8 radial-gradient(#cfcfcf 1px, transparent 1px) 0 0 / 3px 3px;
}
.split i {
    width: 5px;
    height: 43px;
    display: flex;
    align-items: center;
    background: #fff;
    border: 1px solid #777;
}
.split i::after {
    content: "";
    border: 3px solid transparent;
    border-left-color: #555;
    border-right: 0;
}
.flat {
    width: auto;
    height: 5px;
    justify-content: center;
}
.flat i {
    width: 43px;
    height: 5px;
    justify-content: center;
}
.flat i::after {
    border: 3px solid transparent;
    border-top-color: #555;
    border-bottom: 0;
}

/* editor */
.editor {
    flex: 1;
    min-width: 0;
    display: flex;
    flex-direction: column;
    background: #fff;
}
.docs {
    flex: none;
    height: 24px;
    display: flex;
    background: #dcdcdc;
}
.docs button {
    width: 80px;
    padding-left: 7px;
    display: flex;
    align-items: center;
    gap: 5px;
    background: #f0f0f0;
    border-right: 1px solid #d0d0d0;
}
.docs .wide {
    width: 133px;
}
.docs .on {
    background: #fff;
    color: #0080ff;
}
.docs svg {
    width: 14px;
    height: 14px;
    fill: none;
    stroke-width: 1.2;
}
.hruler {
    width: 100%;
    height: 8px;
    background: #fff;
}
.hruler text, .vruler text {
    font: 6px "Liberation Sans", sans-serif;
    fill: #888;
}
.stage {
    flex: 1;
    min-height: 0;
    display: flex;
}
.vruler {
    width: 7px;
    height: 100%;
}
.board {
    flex: 1;
    min-width: 0;
    position: relative;
    display: flex;
    align-items: flex-end;
    background: #000;
}
.pcb {
    position: absolute;
    left: 0;
    top: 0;
    width: 100%;
    height: 100%;
}
.outline {
    fill: none;
    stroke: #a81aac;
}
.rats {
    fill: none;
    stroke: #3c3ca4;
}
.pads {
    fill: none;
    stroke: #85838a;
    stroke-width: 1.5;
}
.slots {
    fill: #111;
    stroke: #6c696e;
    stroke-width: 2;
}
.big {
    stroke-width: 3;
}
.silk {
    fill: none;
    stroke: #f0b818;
    stroke-width: 1.4;
}
.names text {
    font: bold 5px "Liberation Sans", sans-serif;
    fill: #e0c010;
}
.nums text {
    font: 10px "Open Sans", sans-serif;
    fill: #ddd;
}
.small text {
    font-size: 6px;
}
.layers {
    position: relative;
    flex: 1;
    min-width: 0;
    height: 13px;
    margin-left: 8px;
    display: flex;
    overflow: hidden;
    background: #2e2e2e;
    color: #e8e8e8;
}
.layers button {
    flex: none;
    display: flex;
    align-items: center;
    padding: 0 7px 0 6px;
    gap: 5px;
    line-height: 13px;
    border-right: 1px solid #222;
}
.layers .on {
    padding-right: 4px;
    background: #484848;
    color: #fff;
    font-weight: bold;
}
.layers i {
    width: 6px;
    height: 6px;
    outline: 1px solid #666;
}
.layers .nav {
    width: 16px;
    background: #505050;
}
.layers .nav i {
    width: 0;
    height: 0;
    outline: 0;
    border: 3px solid transparent;
}
.layers .nav .prev {
    border-right-color: #fff;
    border-left: 0;
}
.layers .nav .next {
    border-left-color: #fff;
    border-right: 0;
}
.c1 { background: #f00; }
.c2 { background: #00f; }
.c3 { background: #fc0; }
.c4 { background: #66cc33; }
.c5 { background: #800080; }
.c6 { background: #a0f; }
.c7 { background: #808080; }
.c8 { background: #800000; }

/* properties */
.right {
    flex: none;
    width: 239px;
    display: flex;
    flex-direction: column;
}
.rtop {
    flex: 1;
    min-height: 0;
    display: flex;
}
.props {
    flex: 1;
    overflow: hidden;
    background: linear-gradient(#b8b8b8, #b8b8b8) 100% 0 / 6px 177px no-repeat, linear-gradient(90deg, #fff 208px, #f0f0f0 208px);
}
.props header {
    height: 25px;
    padding: 5px 13px 0 6px;
    display: flex;
    justify-content: space-between;
}
.props h3 {
    height: 20px;
    margin-right: 7px;
    padding-left: 5px;
    display: flex;
    align-items: center;
    gap: 4px;
    background: #ededed;
    font-size: 10px;
    font-weight: normal;
}
.props h3::before {
    content: "";
    border: 3px solid #c4c4c4;
    border-top-color: transparent;
    border-left-color: transparent;
}
.form {
    position: relative;
    display: flex;
    flex-direction: column;
    justify-content: space-between;
    padding-left: 18px;
}
.doc {
    height: 207px;
    margin: 7px 0 6px;
}
.doc::before {
    content: "";
    position: absolute;
    left: 96px;
    top: -7px;
    border: 4px solid transparent;
    border-top-color: #c4c4c4;
}
.common {
    height: 74px;
    margin-top: 7px;
}
.form div {
    display: flex;
    align-items: center;
    height: 20px;
}
.form label {
    flex: none;
    width: 83px;
    white-space: nowrap;
}
.form input, .form select {
    height: 20px;
    background: #fff;
    border: 1px solid #d9d9d9;
    border-radius: 2px;
    font-family: "Liberation Serif", serif;
}
.form input {
    padding-left: 7px;
}
.form em {
    margin-left: 4px;
    font-style: normal;
}
.cog, .chip {
    width: 14px;
    height: 14px;
    fill: none;
    stroke: #333;
}
.cog {
    margin-left: 7px;
}
.chip {
    position: absolute;
}
.a { left: 184px; top: 43px; }
.b { left: 194px; top: 123px; }
.rside {
    width: 24px;
    padding: 0 4px 0 0;
    border-right: 0;
}
.rside .pin {
    margin-left: 8px;
}
.rside .on {
    border-right: 0;
    border-bottom: 1px solid #d0d0d0;
}
.status {
    flex: none;
    display: grid;
    grid-template-columns: 22px 78px 36px 1fr;
    grid-auto-rows: 20px;
    column-gap: 8px;
    line-height: 19px;
    background: #ededed;
}
.status dt, .status dd {
    border-top: 1px solid #d8d8d8;
    margin-right: -8px;
}
.status dt {
    text-align: right;
    padding-right: 8px;
}

/* library panel */
.bottom {
    flex: none;
    height: 210px;
    display: flex;
    border-radius: 0 0 5px 5px;
}
.library {
    flex: 1;
    min-width: 0;
    display: flex;
    flex-direction: column;
    background: #fff;
    border-radius: 0 0 0 5px;
}
.lbar {
    flex: none;
    height: 28px;
    display: flex;
    align-items: center;
}
.ltab {
    padding: 0 10px;
    height: 12px;
    line-height: 12px;
    border-right: 1px solid #d4d4d4;
}
.bare {
    border-right: 0;
}
.ltab.on {
    color: #0080ff;
    font-weight: bold;
}
.find {
    flex: 0 1 291px;
}
.acts {
    margin: 0 4px 0 auto;
    display: flex;
    gap: 6px;
}
.acts button {
    height: 20px;
    padding: 0 9px;
    border: 1px solid #d9d9d9;
    border-radius: 2px;
    color: #0080ff;
}
.acts button:last-child {
    padding: 0 7px;
}
.acts .edit {
    border-color: #3a96f0;
}

/* red marker ellipses */
.mark {
    position: relative;
}
.mark::after {
    content: "";
    position: absolute;
    z-index: 2;
    border-radius: 50%;
    background: rgba(255, 0, 0, .6);
    pointer-events: none;
}
.ltab.mark::after {
    inset: -11px -2px -11px -1px;
}
.edit.mark::after {
    inset: -6px -3px -6px -10px;
}
.owners .mark::after {
    inset: -3px 11px -3px -6px;
}
.lfoot .mark::after {
    inset: -13px -7px -18px -6px;
}

/* hand-placed tutorial notes */
.note {
    position: absolute;
    z-index: 3;
    color: #000;
    font: italic 24px/30px "Liberation Sans", sans-serif;
    white-space: nowrap;
    text-shadow: -8px 9px 10px rgba(255, 0, 0, .5), -4px 6px 14px rgba(255, 0, 0, .5);
}
.note1 { left: 8px; top: 119px; }
.note2 { left: 11px; top: 330px; }
.note3 { left: 479px; top: 19px; }

.lbody {
    flex: 1;
    min-height: 0;
    display: flex;
}
.owners {
    flex: none;
    width: 101px;
    padding: 0 4px 0 7px;
    border-right: 1px solid #ddd;
}
.owners button, .cats button {
    display: block;
    width: 100%;
    height: 20px;
    padding-left: 3px;
    text-align: left;
}
.owners .field, .cats .field {
    margin-bottom: 4px;
}
.owners .on, .cats .on {
    background: #e5f4fd;
    color: #0080ff;
}
.owners .on svg {
    width: 56px;
    height: 12px;
    filter: blur(1px);
}
.cats {
    flex: none;
    width: 204px;
    padding-left: 3px;
    position: relative;
}
.cats button {
    padding-left: 12px;
}
.results {
    flex: 1;
    min-width: 0;
    height: 150px;
    margin: 0 4px 0 3px;
    position: relative;
}
table {
    width: 100%;
    border-collapse: separate;
    border-spacing: 0;
    table-layout: fixed;
}
.cno {
    width: 41px;
}
th, td {
    height: 21px;
    padding: 0 0 0 6px;
    text-align: left;
    font-weight: normal;
    line-height: 14px;
    white-space: nowrap;
    border-right: 1px solid #e0e0e0;
    border-bottom: 1px solid #e0e0e0;
}
th {
    position: relative;
    height: 22px;
    background: #f0f0f0;
    border-top: 1px solid #ddd;
}
tr:nth-child(odd) td {
    height: 22px;
}
tbody tr:nth-child(even) {
    background: #f0f0f0;
}
tbody .on {
    background: #e5f4fd;
    color: #0080ff;
}
th i {
    position: absolute;
    right: 8px;
    top: 5px;
}
th i::before, th i::after {
    content: "";
    display: block;
    border: 5px solid transparent;
    border-top: 0;
    border-bottom: 5px solid #c8c8c8;
}
th i::after {
    margin-top: 1px;
    border-top: 5px solid #c8c8c8;
    border-bottom: 0;
}
.thumb {
    position: absolute;
    right: 0;
    top: 22px;
    width: 6px;
    height: 47px;
    border-radius: 3px;
    background: #b4b4b4;
}
.lfoot {
    flex: none;
    height: 25px;
    padding-right: 8px;
    display: flex;
    align-items: flex-start;
    background: #f0f0f0;
    border-top: 1px solid #e0e0e0;
    border-radius: 0 0 0 5px;
}
.lfoot > .pin {
    margin: 5px 8px 0 11px;
}
.lfoot > button {
    width: 59px;
    height: 19px;
    border-left: 1px solid #d0d0d0;
    border-bottom: 1px solid #d0d0d0;
}
.lfoot > .on {
    width: 66px;
    color: #0080ff;
    font-weight: bold;
}
.lfoot > .last {
    width: 82px;
    border-right: 1px solid #d0d0d0;
}
.pager {
    margin-left: auto;
    display: flex;
    align-items: center;
    gap: 4px;
    color: #444;
}
.pager button {
    width: 16px;
    height: 16px;
    display: flex;
    align-items: center;
    justify-content: center;
    border: 1px solid #c8c8c8;
    color: #333;
}
.pager .cur {
    width: 25px;
    background: #c4c4c4;
}
.pager svg {
    width: 9px;
    height: 9px;
    fill: none;
    stroke: #999;
}
.pager > span:first-of-type {
    margin-left: 4px;
}
.pager select {
    background: #eee;
    border-color: #888;
    font-family: "Liberation Serif", serif;
}
.preview {
    flex: none;
    width: 228px;
    padding: 4px 4px 4px 3px;
    background: #fff;
    border-radius: 0 0 5px 0;
}
.preview svg {
    width: 100%;
    height: 100%;
    background: #000;
}

/* desktop */
.desktop {
    flex: none;
    height: 45px;
    position: relative;
    display: flex;
    justify-content: center;
    overflow: hidden;
}
.names-row {
    position: absolute;
    left: 43px;
    top: -6px;
    display: flex;
    gap: 49px;
    color: #aaa;
    font: 11px/14px "Inter", sans-serif;
}
.names-row svg {
    width: 80px;
    height: 12px;
    margin-left: -25px;
}
.dock {
    width: 470px;
    padding: 5px 5px 0 4px;
    display: flex;
    justify-content: space-between;
    background: linear-gradient(90deg, #2b2b2b 80%, #3a4b58);
    border-radius: 4px 4px 0 0;
}
.dock svg {
    width: 34px;
    height: 34px;
    overflow: visible;
}
.dock .bar {
    width: 1px;
    height: 33px;
    margin: 0 5px;
    background: #555;
}
.dock .run {
    height: 40px;
    padding-bottom: 6px;
    background: radial-gradient(circle at 17px 36px, #ccc 1px, transparent 2px) no-repeat;
}
.ps { font: 18px "Open Sans", sans-serif; fill: #26c9f1; }
.term { font: bold 7px "Liberation Mono", monospace; fill: #fff; }
.ltr { font: bold 13px "Open Sans", sans-serif; fill: #fff; }
.pro { font: bold 6px "Liberation Sans", sans-serif; fill: #fff; }
```
